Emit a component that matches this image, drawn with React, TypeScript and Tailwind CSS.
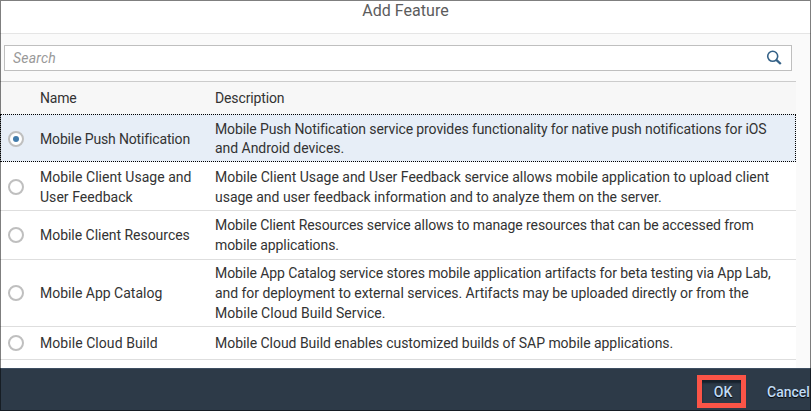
import React from "react";

type Line = { text: string; cls: string };
type Feature = {
  name: Line[];
  description: Line[];
  row: string;
  selected?: boolean;
};

const features: Feature[] = [
  {
    name: [{ text: "Mobile Push Notification", cls: "tracking-[-0.15px]" }],
    description: [
      { text: "Mobile Push Notification service provides functionality for native push notifications for iOS", cls: "tracking-[-0.11px]" },
      { text: "and Android devices.", cls: "tracking-[-0.04px]" },
    ],
    row: "h-12 border border-dotted border-black bg-[#e7eef7] pt-[2px]",
    selected: true,
  },
  {
    name: [
      { text: "Mobile Client Usage and", cls: "tracking-[0.03px]" },
      { text: "User Feedback", cls: "tracking-[0.04px]" },
    ],
    description: [
      { text: "Mobile Client Usage and User Feedback service allows mobile application to upload client", cls: "tracking-[-0.015px]" },
      { text: "usage and user feedback information and to analyze them on the server.", cls: "tracking-[-0.015px]" },
    ],
    row: "h-[49px] border-b border-[#dedede] bg-white pl-px pt-[2px]",
  },
  {
    name: [{ text: "Mobile Client Resources", cls: "tracking-[-0.03px]" }],
    description: [
      { text: "Mobile Client Resources service allows to manage resources that can be accessed from", cls: "tracking-[-0.088px]" },
      { text: "mobile applications.", cls: "tracking-[-0.08px]" },
    ],
    row: "h-[49px] border-b border-[#dedede] bg-white pl-px",
  },
  {
    name: [{ text: "Mobile App Catalog", cls: "tracking-[0px]" }],
    description: [
      { text: "Mobile App Catalog service stores mobile application artifacts for beta testing via App Lab,", cls: "tracking-[-0.085px]" },
      { text: "and for deployment to external services. Artifacts may be uploaded directly or from the", cls: "tracking-[-0.045px]" },
      { text: "Mobile Cloud Build Service.", cls: "tracking-[0.05px]" },
    ],
    row: "h-[67px] border-b border-[#dedede] bg-white pl-px",
  },
  {
    name: [{ text: "Mobile Cloud Build", cls: "tracking-[0.06px]" }],
    description: [
      { text: "Mobile Cloud Build enables customized builds of SAP mobile applications.", cls: "tracking-[-0.035px]" },
    ],
    row: "h-[33px] border-b border-[#dedede] bg-white pl-px",
  },
];

function TextLines({ lines }: { lines: Line[] }) {
  return (
    <>
      {lines.map((l) => (
        <div key={l.text} className="whitespace-nowrap">
          <span className={l.cls}>{l.text}</span>
        </div>
      ))}
    </>
  );
}

function Radio({ selected }: { selected?: boolean }) {
  return (
    <span className="flex size-4 items-center justify-center rounded-full border-2 border-[#bfbfbf] bg-white">
      {selected && <span className="size-1.5 rounded-full bg-[#427cac]" />}
    </span>
  );
}

export default function App() {
  return (
    <div className="relative flex h-[411px] w-[811px] flex-col overflow-hidden bg-[#fafafa] font-['Roboto',sans-serif] text-sm text-[#333333]">
      <header className="flex h-[34px] shrink-0 justify-center border-b border-[#e5e5e5] bg-white">
        <h1 className="mt-px h-5 text-base leading-5 font-normal tracking-[0.04px] text-[#5c5c5c]">Add Feature</h1>
      </header>
      <div className="h-[47px] shrink-0 pt-[11px] pl-1">
        <div className="flex h-[26px] w-[788px] items-center justify-between border border-[#bfbfbf] bg-white pr-[9px] pl-2">
          <span className="tracking-[0.2px] text-[#999999] italic">Search</span>
          <svg width="16" height="16" viewBox="0 0 16 16" fill="none" stroke="#346187">
            <circle cx="6.7" cy="6.3" r="5" strokeWidth="1.6" />
            <path d="M10.3 9.9 L14.8 14" strokeWidth="2.3" />
          </svg>
        </div>
      </div>
      <main className="w-[796px] flex-1 bg-white">
        <div className="flex h-[33px] items-center border-t border-[#cccccc] bg-[#f7f7f7]">
          <span className="w-[175px] pl-10 tracking-[-0.2px]">Name</span>
          <span className="pl-10 tracking-[-0.13px]">Description</span>
        </div>
        {features.map((f) => (
          <div key={f.name[0].text} className={`flex items-center ${f.row}`}>
            <div className="w-[39px] shrink-0 pl-[7px]">
              <Radio selected={f.selected} />
            </div>
            <div className="w-[175px] shrink-0 leading-5">
              <TextLines lines={f.name} />
            </div>
            <div className={f.selected ? "leading-[19px]" : "leading-5"}>
              <TextLines lines={f.description} />
            </div>
          </div>
        ))}
      </main>
      <footer className="flex h-[43px] shrink-0 justify-end border-t border-[#3d4e61] bg-[#2d3a48] pt-[6px] font-medium text-[#c0dbf5] text-shadow-[0_1px_1px_#000000]">
        <div className="mr-[21px] flex h-[33px] w-[49px] items-center justify-center border-5 border-[#fb5447] pl-[3px] inset-shadow-[0_3px_2px_#17202b]">
          OK
        </div>
        <div className="flex h-[33px] w-[44px] items-center whitespace-nowrap">Cancel</div>
      </footer>
      <div className="pointer-events-none absolute inset-0 border border-black/50" />
    </div>
  );
}
